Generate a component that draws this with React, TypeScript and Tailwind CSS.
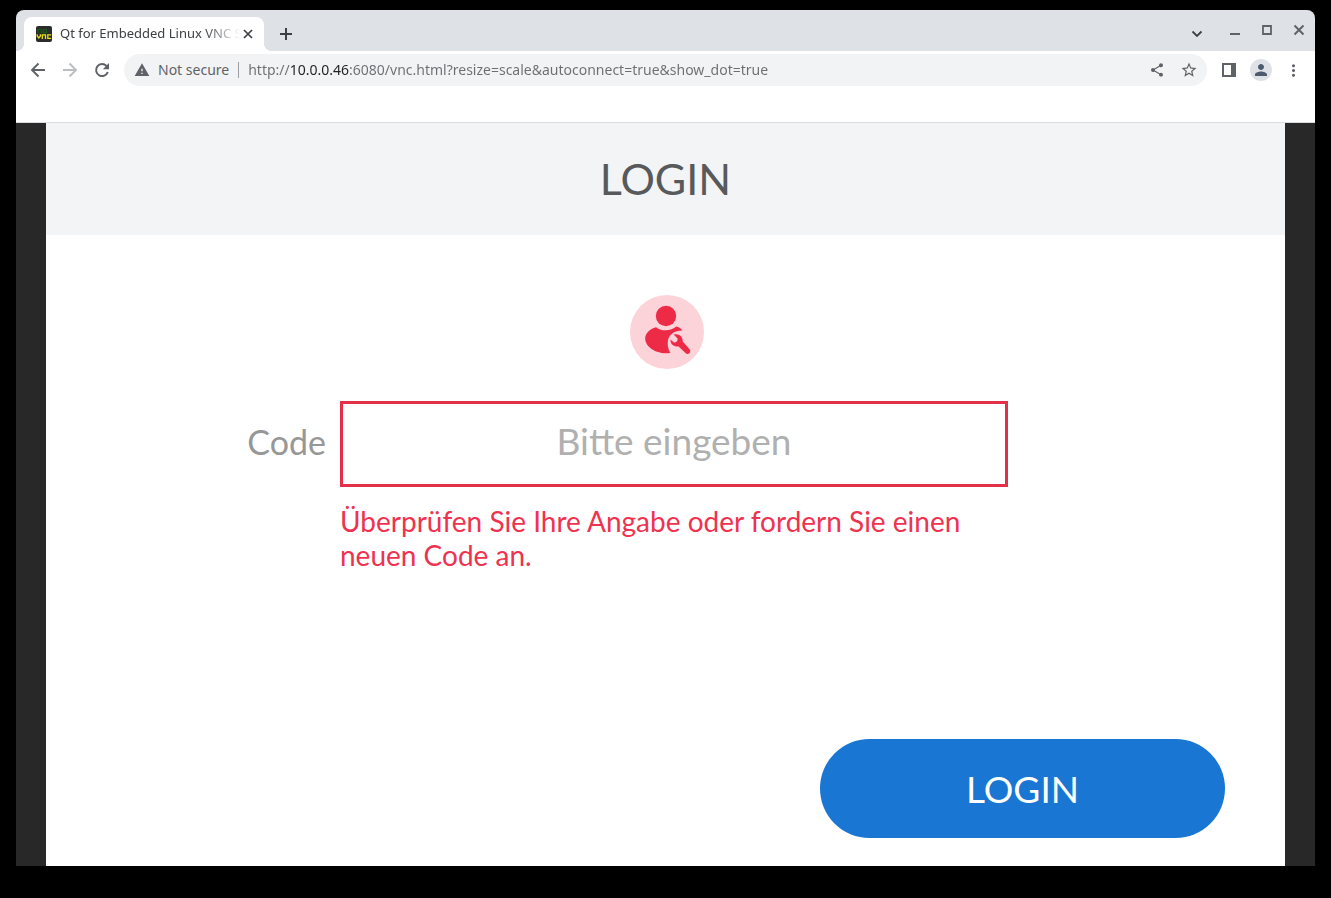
import { useState } from "react";
import type { ReactNode } from "react";
import {
  MdMoreVert,
  MdPerson,
  MdShare,
  MdStarBorder,
  MdWarning,
} from "react-icons/md";

const URL =
  "http://10.0.0.46:6080/vnc.html?resize=scale&autoconnect=true&show_dot=true";

function IconButton({
  label,
  className = "text-[#5f6368]",
  children,
}: {
  label: string;
  className?: string;
  children: ReactNode;
}) {
  return (
    <button
      type="button"
      aria-label={label}
      className={`flex h-8 w-8 shrink-0 items-center justify-center ${className}`}
    >
      {children}
    </button>
  );
}

// 16px line icon
function LineIcon({ d, width = 2 }: { d: string; width?: number }) {
  return (
    <svg viewBox="0 0 16 16" className="h-4 w-4 shrink-0">
      <path d={d} fill="none" stroke="currentColor" strokeWidth={width} />
    </svg>
  );
}

function VncIcon() {
  return (
    <svg viewBox="0 0 16 16" className="h-4 w-4 shrink-0">
      <rect width="16" height="16" rx="2" fill="#2b2b2b" />
      <path
        d="M2 7V3.500h3.200V7M7.200 3.500h3.200v3.200H7.200z"
        fill="none"
        stroke="#155c12"
        strokeWidth="1.2"
      />
      <path
        d="M1.200 8.200v1.800l1.600 2 1.600-2V8.200M6.300 13V8.800h3.200V13M15.200 8.900h-3.400v3.400h3.400"
        fill="none"
        stroke="#e6e010"
        strokeWidth="1.3"
      />
    </svg>
  );
}

function ServiceUserIcon() {
  return (
    <svg viewBox="0 0 74 74" className="h-[74px] w-[74px]">
      <circle cx="37" cy="37" r="37" fill="#fdd3da" />
      <circle cx="36" cy="21" r="10.2" fill="#ee2b47" />
      <path
        d="M26 32.200C19.500 34 15.200 38.500 15.200 43.500C15.200 51.500 25 58.300 36 58.300C37.800 58.300 39.200 58.200 40.400 57.800C37.600 53.500 37 47.500 38.600 43.200C40.500 38.500 45.500 35.800 52.500 35.600C50.800 33.400 48.500 32 46.300 31.600C41.500 36.200 31 36.600 26 32.200Z"
        fill="#ee2b47"
      />
      {/* wrench */}
      <path
        d="M43.600 39.600C48.500 37.800 53.300 41.500 52.600 46.200L59.800 54.400C61.400 56.800 58.900 60 56 58.600L48.300 51.200C44.300 52.300 40.200 49.500 40.400 44.600L44 47.600C46.300 47.600 47.900 46 47.600 43.600Z"
        fill="#ee2b47"
      />
    </svg>
  );
}

function TabStrip() {
  return (
    <div className="flex h-[41px] bg-[#dee1e6] pl-2">
      <div className="relative mt-[7px] flex w-60 items-center rounded-t-lg bg-white pr-2 pl-3">
        <VncIcon />
        <span className="ml-2 flex-1 overflow-hidden mask-r-from-80% text-[13px] whitespace-nowrap text-[#3c4043]">
          Qt for Embedded Linux VNC Server
        </span>
        <button type="button" aria-label="Close tab" className="text-[#3c4043]">
          <LineIcon d="M4 4l8 8M12 4l-8 8" width={1.7} />
        </button>
        <span className="absolute bottom-0 -left-2 h-2 w-2 bg-[radial-gradient(circle_at_0_0,transparent_8px,white_8px)]" />
        <span className="absolute -right-2 bottom-0 h-2 w-2 bg-[radial-gradient(circle_at_100%_0,transparent_8px,white_8px)]" />
      </div>
      <IconButton label="New tab" className="mt-2 ml-[6px] text-[#3c4043]">
        <LineIcon d="M8 2v12M2 8h12" />
      </IconButton>

      {/* Window controls */}
      <div className="ml-auto flex pt-1">
        <IconButton label="Search tabs" className="mt-1 mr-[6px] text-[#3c4043]">
          <LineIcon d="M3.500 5.500L8 10l4.500-4.500" width={1.8} />
        </IconButton>
        <IconButton label="Minimize">
          <LineIcon d="M3 12h10" />
        </IconButton>
        <IconButton label="Maximize">
          <LineIcon d="M4 4h8v8H4z" width={1.8} />
        </IconButton>
        <IconButton label="Close window">
          <LineIcon d="M3.500 3.500l9 9M12.500 3.500l-9 9" />
        </IconButton>
      </div>
    </div>
  );
}

function Toolbar() {
  const [url, setUrl] = useState(URL);

  return (
    <div className="flex h-[72px] items-start gap-[6px] border-b border-[#dadce0] bg-white px-[6px] pt-[3px]">
      <div className="flex">
        <IconButton label="Back">
          <LineIcon d="M15 8H2.500M8.500 1.500L2 8l6.500 6.500" width={1.9} />
        </IconButton>
        <IconButton label="Forward" className="text-[#bcbec1]">
          <LineIcon d="M1 8h12.500M7.500 1.500L14 8l-6.500 6.500" width={1.9} />
        </IconButton>
        <IconButton label="Reload">
          <svg viewBox="0 0 16 16" className="h-4 w-4">
            <path
              d="M13.800 10A6 6 0 1 1 12.500 4"
              fill="none"
              stroke="currentColor"
              strokeWidth="2"
            />
            <path d="M15 1v6.200H8.800z" fill="currentColor" />
          </svg>
        </IconButton>
      </div>

      <div className="flex h-8 min-w-0 flex-1 items-center rounded-full bg-[#f1f3f4] pr-[2px] pl-[10px] text-sm text-[#5f6368]">
        <MdWarning size={16} className="shrink-0" />
        <span className="ml-2 shrink-0">Not secure</span>
        <span className="mx-[9px] h-4 w-px bg-[#9aa0a6]" />
        {/* the host part of the address is darker than the rest */}
        <input
          type="text"
          aria-label="Address"
          value={url}
          onChange={(e) => setUrl(e.target.value)}
          className="min-w-0 flex-1 bg-[linear-gradient(90deg,#6b6f73_42px,#202124_42px,#202124_101px,#6b6f73_101px)] bg-clip-text text-transparent outline-none"
        />
        <IconButton label="Share">
          <MdShare size={16} />
        </IconButton>
        <IconButton label="Bookmark">
          <MdStarBorder size={18} />
        </IconButton>
      </div>

      <div className="flex">
        <IconButton label="Side panel">
          <svg viewBox="0 0 14 14" className="h-[14px] w-[14px]">
            <path d="M1 1h12v12H1z" fill="none" stroke="currentColor" strokeWidth="2" />
            <path d="M9 0h5v14H9z" fill="currentColor" />
          </svg>
        </IconButton>
        <IconButton label="Profile">
          <span className="flex h-[22px] w-[22px] items-center justify-center rounded-full bg-[#dee1e6] text-[#4d5b70]">
            <MdPerson size={18} />
          </span>
        </IconButton>
        <IconButton label="Menu">
          <MdMoreVert size={19} />
        </IconButton>
      </div>
    </div>
  );
}

function LoginPanel() {
  const [code, setCode] = useState("");

  return (
    <main className="flex flex-1 flex-col bg-white font-[Lato,sans-serif]">
      <header className="flex h-28 items-center justify-center bg-[#f3f4f6]">
        <h1 className="text-[43px] text-[#58595b]">LOGIN</h1>
      </header>

      <form
        className="flex flex-1 flex-col pt-[60px]"
        onSubmit={(e) => e.preventDefault()}
      >
        <div className="flex justify-center pl-[3px]">
          <ServiceUserIcon />
        </div>

        <div className="mt-8 grid grid-cols-[280px_1fr] items-center gap-x-[14px] gap-y-[17px] pr-[277px]">
          <label
            htmlFor="code"
            className="pb-[6px] text-right text-[34px] text-[#979797]"
          >
            Code
          </label>
          <input
            id="code"
            type="text"
            value={code}
            onChange={(e) => setCode(e.target.value)}
            placeholder="Bitte eingeben"
            aria-invalid="true"
            aria-describedby="code-error"
            className="h-[86px] w-full border-3 border-[#e2304a] pb-2 text-center text-[37px] text-[#58595b] outline-none placeholder:text-[#b0b0b0]"
          />
          <p
            id="code-error"
            className="col-start-2 text-[28px] leading-[34px] text-[#ee3350]"
          >
            Überprüfen Sie Ihre Angabe oder fordern Sie einen neuen Code an.
          </p>
        </div>

        <div className="mt-auto flex justify-end pr-[60px] pb-7">
          <button
            type="submit"
            className="h-[99px] w-[405px] rounded-full bg-[#1976d3] text-[37px] text-white"
          >
            LOGIN
          </button>
        </div>
      </form>
    </main>
  );
}

export default function App() {
  return (
    <div className="flex min-h-screen flex-col bg-black px-4 pt-[10px] pb-8 font-['Noto_Sans',sans-serif]">
      <div className="flex flex-1 flex-col overflow-hidden rounded-t-lg">
        <TabStrip />
        <Toolbar />
        <div className="flex flex-1 bg-[#282828] px-[30px]">
          <LoginPanel />
        </div>
      </div>
    </div>
  );
}
